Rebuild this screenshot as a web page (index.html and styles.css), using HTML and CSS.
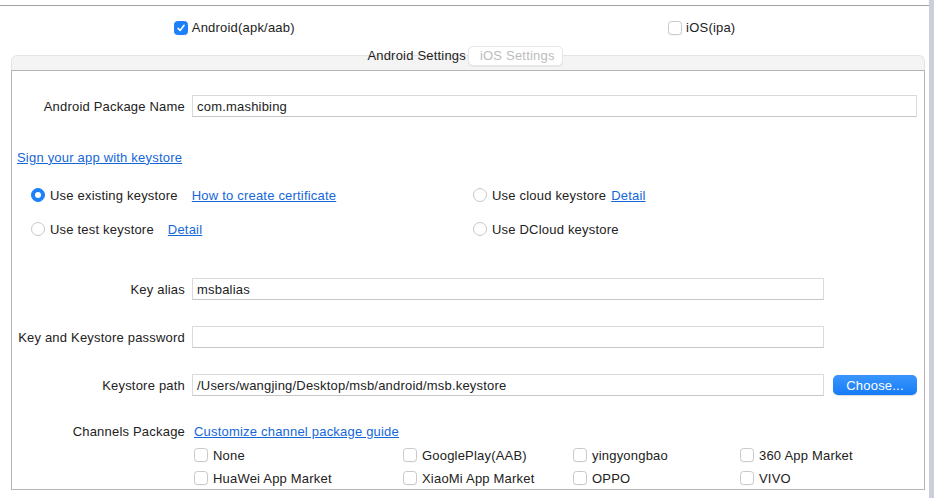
FILE: index.html
```html
<!DOCTYPE html>
<html>
<head>
<meta charset="utf-8">
<link rel="stylesheet" href="styles.css">
</head>
<body>
<div class="window">
  <div class="main">
    <div class="topline"></div>
    <div class="platforms">
      <label class="plat"><span class="cb checked"><svg viewBox="0 0 14 14" width="14" height="14"><path d="M3.6 7.4 L6 9.9 L10.6 3.9" fill="none" stroke="#fff" stroke-width="1.8" stroke-linecap="round" stroke-linejoin="round"/></svg></span><span class="plat-text">Android(apk/aab)</span></label>
      <label class="plat"><span class="cb"></span><span class="plat-text">iOS(ipa)</span></label>
    </div>
    <div class="tabs">
      <span class="tab active">Android Settings</span>
      <span class="tab inactive">iOS Settings</span>
    </div>
    <div class="panel-head"></div>
    <div class="panel">
      <div class="row row-pkg">
        <span class="lbl">Android Package Name</span>
        <div class="input wide">com.mashibing</div>
      </div>
      <div class="row row-sign">
        <a class="link">Sign your app with keystore</a>
      </div>
      <div class="radios r1">
        <div class="ritem"><span class="radio on"></span><span class="rtext">Use existing keystore</span><a class="link l-far">How to create certificate</a></div>
        <div class="ritem"><span class="radio"></span><span class="rtext">Use cloud keystore</span><a class="link l-near">Detail</a></div>
      </div>
      <div class="radios r2">
        <div class="ritem"><span class="radio"></span><span class="rtext">Use test keystore</span><a class="link l-far">Detail</a></div>
        <div class="ritem"><span class="radio"></span><span class="rtext">Use DCloud keystore</span></div>
      </div>
      <div class="row row-alias">
        <span class="lbl">Key alias</span>
        <div class="input mid">msbalias</div>
      </div>
      <div class="row row-pass">
        <span class="lbl">Key and Keystore password</span>
        <div class="input mid"></div>
      </div>
      <div class="row row-path">
        <span class="lbl">Keystore path</span>
        <div class="input mid path">/Users/wangjing/Desktop/msb/android/msb.keystore</div>
        <button class="choose">Choose...</button>
      </div>
      <div class="row row-chan">
        <span class="lbl">Channels Package</span>
        <a class="link chan-link">Customize channel package guide</a>
      </div>
      <div class="channels">
        <label class="ch"><span class="cb"></span>None</label>
        <label class="ch"><span class="cb"></span>GooglePlay(AAB)</label>
        <label class="ch"><span class="cb"></span>yingyongbao</label>
        <label class="ch"><span class="cb"></span>360 App Market</label>
        <label class="ch"><span class="cb"></span>HuaWei App Market</label>
        <label class="ch"><span class="cb"></span>XiaoMi App Market</label>
        <label class="ch"><span class="cb"></span>OPPO</label>
        <label class="ch"><span class="cb"></span>VIVO</label>
      </div>
    </div>
  </div>
  <div class="scrollstrip"></div>
</div>
</body>
</html>
```

FILE: styles.css
```css
* { box-sizing: border-box; }
html, body { margin: 0; padding: 0; background: #ffffff; }
body {
  font-family: "Liberation Sans", Arial, sans-serif;
  font-size: 13px;
  letter-spacing: 0.2px;
  color: #222222;
}
.window { display: flex; width: 934px; height: 498px; overflow: hidden; }
.main { flex: 1; width: 929px; padding-top: 5px; }
.scrollstrip { width: 5px; background: #cbcfdb; }

.topline { border-top: 1px solid #a0a0a0; }

.platforms {
  display: grid;
  grid-template-columns: 1fr 1fr;
  margin-top: 14px;
  height: 16px;
}
.plat { display: flex; align-items: center; justify-content: center; gap: 4px; }
.platforms .plat:first-child { padding-left: 4px; }
.platforms .plat:last-child { padding-left: 10px; }
.plat-text { line-height: 16px; }

.cb {
  width: 14px; height: 14px; flex: none;
  border: 1px solid #c9c9c9;
  border-radius: 3.5px;
  background: #fff;
  display: inline-flex; align-items: center; justify-content: center;
  box-shadow: 0 0.5px 0.5px rgba(0,0,0,0.06);
}
.cb.checked { background: #1b80fa; border-color: #1b80fa; }
.cb svg { display: block; }

.tabs {
  display: flex; justify-content: center;
  margin-top: 10px; height: 20px;
  padding-right: 5px;
  position: relative; z-index: 1;
}
.tab { height: 20px; line-height: 20px; padding: 0 6px; }
.tab.active { color: #1e1e1e; padding-right: 2px; }
.tab.inactive {
  color: #bcbcbc;
  background: #fff;
  border: 1px solid #e6e6e6;
  border-radius: 5px;
  box-shadow: 0 1px 1px rgba(0,0,0,0.06);
  padding: 0 7px 0 11px;
  line-height: 18px;
}

.panel-head {
  margin: -11px 4px 0 11px;
  height: 15px;
  background: #f4f4f4;
  border: 1px solid #e4e4e4;
  border-bottom: none;
  border-radius: 6px 6px 0 0;
}
.panel {
  margin: 0 4px 0 11px;
  border: 1px solid #b5b5b5;
  background: #fff;
  padding-bottom: 2px;
}

.row { display: flex; align-items: center; }
.lbl { width: 173px; text-align: right; flex: none; margin-right: 7px; white-space: nowrap; }
.input {
  height: 22px;
  border: 1px solid #dadada;
  border-bottom-color: #c6c6c6;
  background: #fff;
  line-height: 21px;
  padding: 0 4px;
  white-space: nowrap;
  overflow: hidden;
}
.input.wide { width: 725px; }
.input.mid { width: 632px; }
.input.path { padding-left: 4px; }

.row-pkg { margin-top: 24px; height: 22px; }
.row-sign { margin-top: 32px; height: 16px; padding-left: 5px; }
.link { color: #1567d8; text-decoration: underline; cursor: pointer; white-space: nowrap; }

.radios {
  display: grid;
  grid-template-columns: 442px 1fr;
  padding-left: 19px;
  height: 18px;
}
.r1 { margin-top: 21px; }
.r2 { margin-top: 16px; }
.ritem { display: flex; align-items: center; }
.radio {
  width: 14px; height: 14px; flex: none;
  border-radius: 50%;
  border: 1px solid #c9c9c9;
  background: #fff;
  margin-right: 5px;
  display: inline-flex; align-items: center; justify-content: center;
}
.radio.on { background: #1b80fa; border-color: #1b80fa; }
.radio.on::after {
  content: ""; width: 6px; height: 6px; border-radius: 50%; background: #fff;
}
.l-far { margin-left: 14px; }
.l-near { margin-left: 5px; }

.row-alias { margin-top: 40px; height: 22px; }
.row-pass { margin-top: 26px; height: 22px; }
.row-path { margin-top: 26px; height: 22px; }
.choose {
  margin-left: 9px;
  width: 84px; height: 20px;
  border: none;
  border-radius: 5px;
  background: linear-gradient(#3a96fd, #157bf6);
  color: #fff;
  font-family: inherit;
  font-size: 13px;
  letter-spacing: 0.2px;
  padding: 0;
  box-shadow: 0 0.5px 1px rgba(0,0,0,0.15);
}
.row-chan { margin-top: 26px; height: 18px; }
.chan-link { margin-left: 2px; }

.channels {
  display: grid;
  grid-template-columns: 209px 170px 167px 1fr;
  grid-auto-rows: 18px;
  row-gap: 5px;
  margin-top: 6px;
  padding-left: 182px;
}
.ch { display: flex; align-items: center; gap: 5px; white-space: nowrap; }
```
